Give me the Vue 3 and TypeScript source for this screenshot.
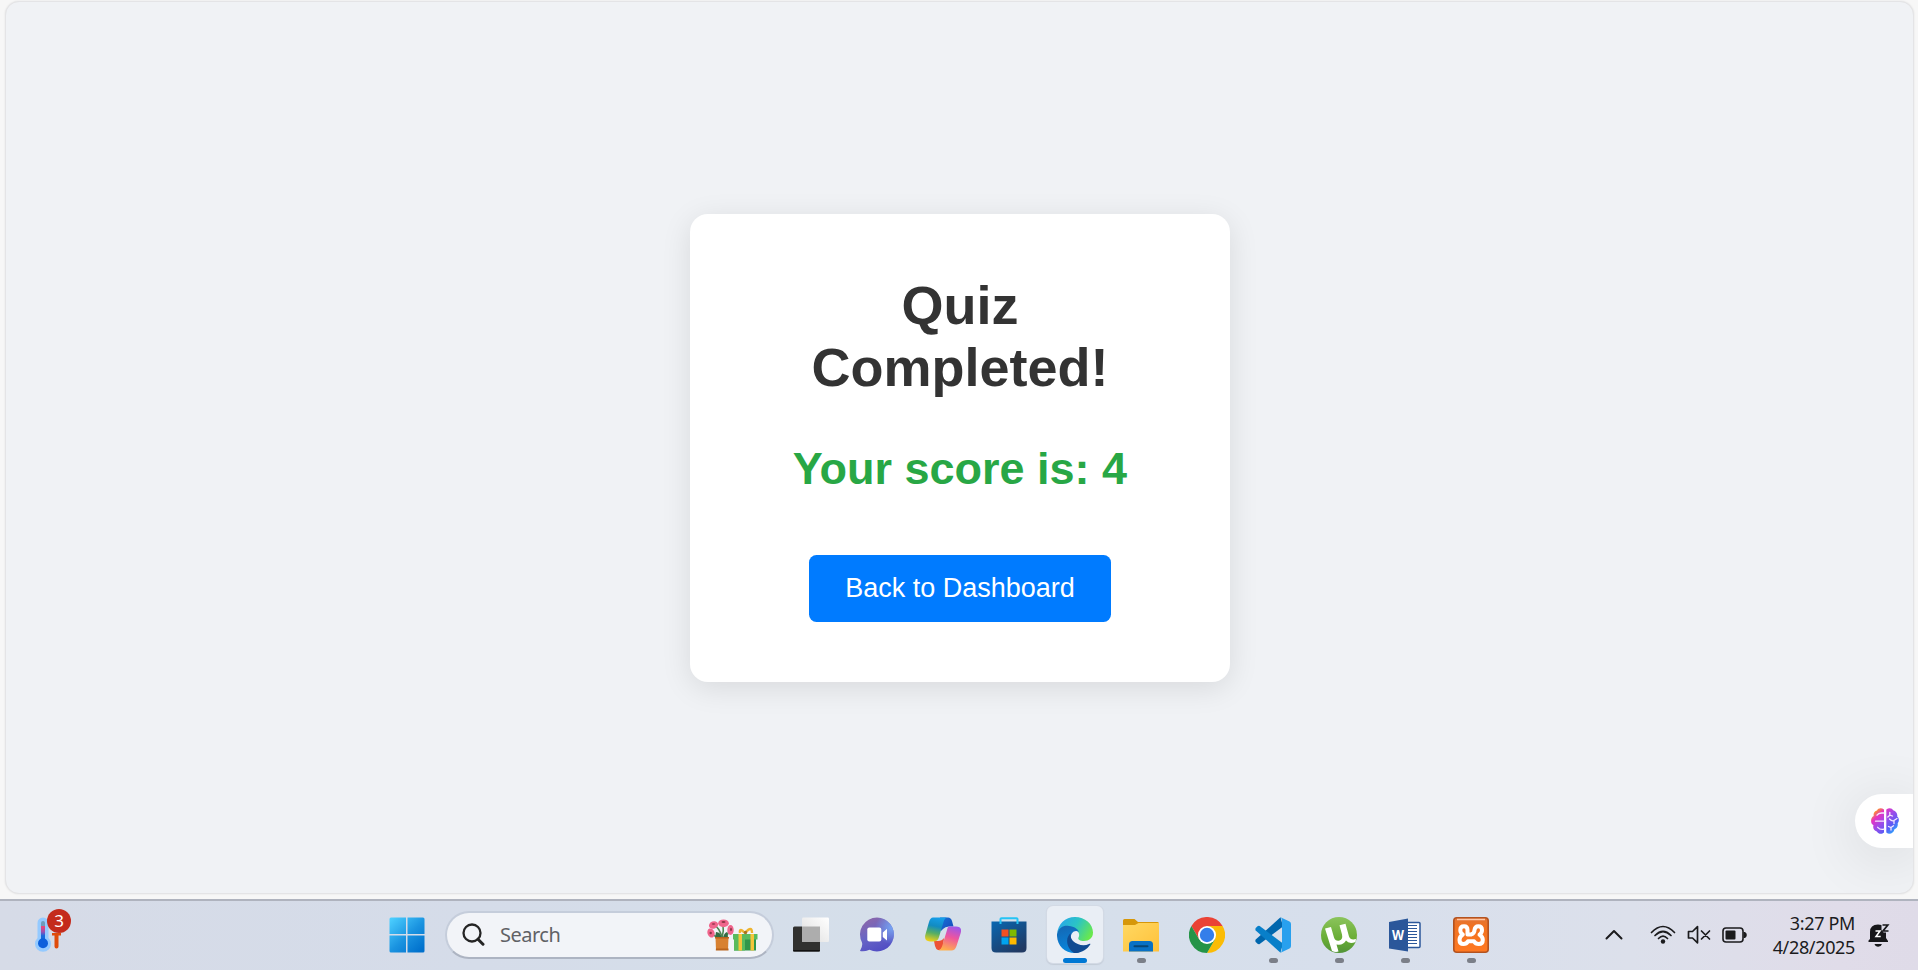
<script setup lang="ts">
import { ref } from 'vue'

const score = ref<number>(4)
const query = ref<string>('')
const notifications = ref<number>(3)
const clock = { time: '3:27 PM', date: '4/28/2025' }
</script>

<template>
  <div class="screen">
    <main class="browser">
      <section class="page">
        <div class="card">
          <h1>Quiz Completed!</h1>
          <p class="score">Your score is: {{ score }}</p>
          <button class="back" type="button">Back to Dashboard</button>
        </div>
        <aside class="assistant">
          <svg width="28" height="26" viewBox="0 0 28 26">
            <defs>
              <linearGradient id="brain" x1="0.05" y1="0" x2="0.950" y2="0.9">
                <stop offset="0" stop-color="#ff9a1f" />
                <stop offset="0.13" stop-color="#fb8a35" />
                <stop offset="0.28" stop-color="#e632c4" />
                <stop offset="0.5" stop-color="#a04be8" />
                <stop offset="0.75" stop-color="#5b5bf5" />
                <stop offset="1" stop-color="#25b4ff" />
              </linearGradient>
            </defs>
            <path fill="url(#brain)" d="M13 1.5C10.500 -.5 7 0 6 2.500C3.500 3 2 5.500 2.800 8C.8 9 0 11 .1 13.200C.1 15 1 16.500 2.500 17.200C1.500 20 3 22.500 5.800 23.500C7.500 26.300 11 26.500 13 24.500ZM15.300 1.500C17.800-.5 21-.2 22.200 2.300C25 3 26.800 5.700 26.200 8.500C28 10 28.600 13 26.700 15.300C27.200 18 26 20.300 23.500 21.200C22.500 25.500 18.200 27 15.300 24.500Z" />
            <path fill="none" stroke="#f6e8ff" stroke-width="1.300" stroke-linecap="round" d="M6 7.200Q7.500 4.800 11 5H13M4.500 13.200H13M6.700 19.300Q9 22 13 21.200M18.800 4.300V7.200L16.800 9M18.800 7.200L21.500 8M18.500 11Q21 13.500 23 12.500L26 10.500M23 12.500V15.500M17.500 18.500L20 19.500L22.500 17.800M20 19.500V22" />
          </svg>
        </aside>
      </section>
    </main>

    <footer class="taskbar">
      <div class="widgets">
        <svg width="28" height="36" viewBox="0 0 28 36">
          <defs>
            <linearGradient id="mercury" x1="0" y1="0" x2="0" y2="1">
              <stop offset="0" stop-color="#f34573" />
              <stop offset="0.45" stop-color="#9b4fb3" />
              <stop offset="0.75" stop-color="#1769dc" />
            </linearGradient>
          </defs>
          <path fill="#94caff" d="M2.500 6a5.500 5.500 0 0 1 11 0v15a8 8 0 1 1-11 0Z" />
          <path fill="#6f9bbc" d="M6 6a2 2 0 0 1 4 0v5H6Z" />
          <path fill="url(#mercury)" d="M6 9h4v13H6Z" />
          <circle cx="8" cy="26.300" r="5" fill="#0b5fdc" />
          <path fill="#df4b0b" d="M17 16H26V18.500H23.500V29.500a2 2 0 0 1-4 0V18.500H17Z" />
        </svg>
        <span class="badge">{{ notifications }}</span>
      </div>

      <nav class="apps">
        <button class="app" type="button" aria-label="Start">
          <svg width="36" height="36" viewBox="0 0 36 36">
            <defs>
              <linearGradient id="win" gradientUnits="userSpaceOnUse" x1="2" y1="1" x2="32" y2="34">
                <stop offset="0" stop-color="#4ccfff" />
                <stop offset="0.55" stop-color="#1a93e0" />
                <stop offset="1" stop-color="#0070cc" />
              </linearGradient>
            </defs>
            <path fill="url(#win)" d="M2 .5H17V17H.5V2Q.5.5 2 .5ZM18.500.5H34Q35.500.5 35.500 2V17H18.500ZM.5 18.500H17V35.500H2Q.5 35.500.5 34ZM18.500 18.500H35.500V34Q35.500 35.500 34 35.500H18.500Z" />
          </svg>
        </button>

        <label class="search">
          <svg width="23" height="24" viewBox="0 0 23 24" fill="none" stroke="#252525" stroke-linecap="round">
            <circle cx="10" cy="10" r="8.500" stroke-width="2.300" />
            <path d="M16 16.200L21 21.200" stroke-width="3" />
          </svg>
          <input v-model="query" type="text" placeholder="Search" />
          <svg class="gifts" width="51" height="32" viewBox="0 0 51 32">
            <g fill="none" stroke="#4c8752" stroke-width="1.600">
              <path d="M15 19Q13 9 7 6M15 19Q17 12 16 5M16 19Q22 16 22 10M14 19Q8 18 4 14" />
            </g>
            <path fill="#356c44" d="M9 13Q14 13 14.500 19H8ZM20 13Q17 14 16 19L21 18Z" />
            <g fill="#f0658c">
              <ellipse cx="6.500" cy="6" rx="4.700" ry="3.600" transform="rotate(-20 6.500 6)" />
              <ellipse cx="16.500" cy="4.300" rx="5.300" ry="3.900" />
              <ellipse cx="4" cy="14" rx="3.500" ry="4.700" transform="rotate(-20 4 14)" />
              <ellipse cx="23.500" cy="11" rx="3.200" ry="4.900" />
            </g>
            <g fill="#8e3547">
              <ellipse cx="6.500" cy="5" rx="1.800" ry=".8" />
              <ellipse cx="16.500" cy="3" rx="2" ry=".9" />
              <circle cx="3.700" cy="14" r="1.200" />
              <ellipse cx="24" cy="10.500" rx=".9" ry="1.700" />
            </g>
            <path fill="#d88131" d="M8.500 18.500H21.500L21 31H9Z" />
            <path fill="#b9641d" d="M8 18H22V19.500H8ZM9 29.500H21.500V31.500H8.800Z" />
            <path fill="#31964a" d="M27 19H49V31.500H27Z" />
            <path fill="#59bb5d" d="M26 15H50.500V20.500H26ZM27 20.500H38V31.500H27Z" />
            <path fill="#f5c53b" d="M31.500 15H35V31.500H31.500ZM43.500 15H47V31.500H43.500Z" />
            <path fill="none" stroke="#eeb42f" stroke-width="2.400" d="M38 14Q32 8 33 14M38 14Q45 6 45 14" />
            <circle cx="38.500" cy="13.500" r="1.700" fill="#a67222" />
          </svg>
        </label>

        <button class="app" type="button" aria-label="Task view">
          <svg width="36" height="36" viewBox="0 0 36 36">
            <defs>
              <linearGradient id="pane" x1="0" y1="1" x2="1" y2="0">
                <stop offset="0" stop-color="#ddd" /><stop offset="1" stop-color="#fff" />
              </linearGradient>
            </defs>
            <rect x="0" y="9.500" width="27" height="25" rx="1.500" fill="#31312f" />
            <rect x="0" y="33" width="27" height="1.500" rx=".7" fill="#111" />
            <rect x="9" y=".5" width="27" height="24.500" rx="1.200" fill="url(#pane)" />
            <path fill="#adadad" d="M9 9.500H27V25H10Q9 25 9 24Z" />
          </svg>
        </button>

        <button class="app" type="button" aria-label="Chat">
          <svg width="36" height="36" viewBox="0 0 36 36">
            <defs>
              <linearGradient id="chat" x1="0.200" y1="0" x2="0.650" y2="1">
                <stop offset="0" stop-color="#8e67a8" /><stop offset="0.500" stop-color="#6865c5" /><stop offset="1" stop-color="#504cc4" />
              </linearGradient>
              <radialGradient id="chatGlow" cx="0.95" cy="0.3" r="0.5">
                <stop offset="0" stop-color="#77a4f2" /><stop offset="1" stop-color="#77a4f2" stop-opacity="0" />
              </radialGradient>
            </defs>
            <path fill="url(#chat)" d="M18 .5a17 17 0 1 1-7.500 32.300Q5 35 1 34Q4 29 3 25.500A17 17 0 0 1 18 .5Z" />
            <path fill="url(#chatGlow)" d="M18 .5a17 17 0 1 1-7.500 32.300Q5 35 1 34Q4 29 3 25.500A17 17 0 0 1 18 .5Z" />
            <rect x="8.300" y="10.500" width="14" height="14" rx="2" fill="#fff" />
            <path fill="#fff" d="M23.800 15.500L28 11.800V23.500L23.800 20Z" />
          </svg>
        </button>

        <button class="app" type="button" aria-label="Copilot">
          <svg width="36" height="36" viewBox="0 0 36 36">
            <defs>
              <linearGradient id="copA" x1="0.500" y1="0" x2="0.300" y2="1">
                <stop offset="0" stop-color="#159de8" /><stop offset="0.350" stop-color="#128bc1" /><stop offset="0.650" stop-color="#56ae65" /><stop offset="1" stop-color="#f1d016" />
              </linearGradient>
              <linearGradient id="copB" x1="0.700" y1="0" x2="0.400" y2="1">
                <stop offset="0" stop-color="#9d55eb" /><stop offset="0.450" stop-color="#ee559e" /><stop offset="1" stop-color="#ffb04c" />
              </linearGradient>
              <linearGradient id="copC" x1="0" y1="0" x2="1" y2="1">
                <stop offset="0" stop-color="#1673d8" /><stop offset="1" stop-color="#1747b9" />
              </linearGradient>
            </defs>
            <path fill="url(#copC)" d="M15 .5H23Q26 .5 27 4L28.500 9.500H24Q20 9.500 18 12L16 14Z" />
            <path fill="#ed5136" d="M9 24H13Q17 24 19 21L18 29Q16.500 33.500 13 33Q11 32.500 10 29Z" />
            <path fill="url(#copA)" d="M8 .5H22Q19.500 1 18.500 5L14 20Q13 24.500 8 24.500H5Q-1 24.500.3 18L4 5Q5.300.5 8 .5Z" />
            <path fill="url(#copB)" d="M24 9.500H31Q37.500 9.500 35.700 16L31.500 29Q30 33.500 26.500 33.500H13Q16 33 17.500 28L22 13Q22.700 9.500 24 9.500Z" />
          </svg>
        </button>

        <button class="app" type="button" aria-label="Store">
          <svg width="36" height="36" viewBox="0 0 36 36">
            <defs>
              <linearGradient id="store" x1="0" y1="0" x2="0.700" y2="1">
                <stop offset="0" stop-color="#0867b2" /><stop offset="1" stop-color="#213a63" />
              </linearGradient>
            </defs>
            <path fill="url(#store)" d="M.5 4.500H35.500V31Q35.500 35.500 31 35.500H5Q.5 35.500.5 31Z" />
            <path fill="none" stroke="#25c4f5" stroke-width="2" d="M9.500 7V2Q9.500 1.300 10.500 1.300H25.500Q26.500 1.300 26.500 2V7" />
            <path fill="#f25022" d="M10.500 12.500H17.500V19.500H10.500Z" />
            <path fill="#7fba00" d="M18.500 12.500H25.500V19.500H18.500Z" />
            <path fill="#00a4ef" d="M10.500 20.500H17.500V27.500H10.500Z" />
            <path fill="#ffb900" d="M18.500 20.500H25.500V27.500H18.500Z" />
          </svg>
        </button>

        <button class="app active running" type="button" aria-label="Edge">
          <svg width="36" height="36" viewBox="0 0 36 36">
            <defs>
              <linearGradient id="edgeTop" x1="0" y1="0.200" x2="1" y2="0.600">
                <stop offset="0" stop-color="#27a5ed" /><stop offset="0.500" stop-color="#2bc4c5" /><stop offset="1" stop-color="#69e84d" />
              </linearGradient>
              <linearGradient id="edgeSide" x1="0.200" y1="0" x2="0.500" y2="1">
                <stop offset="0" stop-color="#1467b4" /><stop offset="1" stop-color="#0788de" />
              </linearGradient>
            </defs>
            <path fill="url(#edgeTop)" d="M0 17C1 7 8 0 18 0C28 0 36 7 36 15.500C36 21 32 24 27 24C23 24 20.500 22.500 21.500 20.500C23.500 17 21 13.500 17 12C10 7.500 2 11 0 17Z" />
            <path fill="url(#edgeSide)" d="M0 17C2 10 7 8 12 9C17 9.500 21 12 22 15C17 12 13 17 14 22C15 29 22 33 28 31C25 34 21.500 36 18 36C7 36-.5 28 0 17Z" />
            <path fill="#104a91" d="M14 16C8 20 9 31 17 36C24 36.500 30 32.500 33.300 27.500C33.500 26.500 33 26.500 32 27C27 29.500 20 28 16 24C13.500 21 13 18 14 16Z" />
          </svg>
        </button>

        <button class="app running" type="button" aria-label="File Explorer">
          <svg width="36" height="36" viewBox="0 0 36 36">
            <defs>
              <linearGradient id="folder" x1="0" y1="0" x2="1" y2="1">
                <stop offset="0" stop-color="#ffd862" /><stop offset="1" stop-color="#ffc13a" />
              </linearGradient>
            </defs>
            <path fill="#d69709" d="M0 3.500Q0 2 1.500 2H11.500L15 5H34.500Q36 5 36 6.500V12H0Z" />
            <path fill="url(#folder)" d="M0 8H12L15.500 6H36V34.500H0Z" />
            <path fill="#0871c5" d="M6 34.500V27.500Q6 24 9.500 24H26.500Q30 24 30 27.500V34.500Z" />
            <path stroke="#064675" stroke-width="2" stroke-linecap="round" d="M11.500 29.200H24.500" />
          </svg>
        </button>

        <button class="app" type="button" aria-label="Chrome">
          <svg width="36" height="36" viewBox="0 0 36 36">
            <path fill="#ea4335" d="M2.400 9A18 18 0 0 1 33.600 9H18L10.200 22.500Z" />
            <path fill="#fbbc05" d="M33.600 9A18 18 0 0 1 18 36L25.800 22.500L18 9Z" />
            <path fill="#259447" d="M2.400 9A18 18 0 0 0 18 36L25.800 22.500H10.200Z" />
            <circle cx="18" cy="18" r="9" fill="#fff" />
            <circle cx="18" cy="18" r="7.200" fill="#347eea" />
          </svg>
        </button>

        <button class="app running" type="button" aria-label="Visual Studio Code">
          <svg width="36" height="36" viewBox="0 0 36 36">
            <path fill="#0066ad" d="M.7 22.500L25.500.3L28 9.500L4.700 27Q3.500 27.500 2.500 26.700L.7 25Q0 23.700.7 22.500Z" />
            <path fill="#087fc9" d="M.7 13.500L25.500 35.700L28 26.500L4.700 9Q3.500 8.500 2.500 9.300L.7 11Q0 12.300.7 13.500Z" />
            <path fill="#28a0ee" d="M25.500.3L34.500 4.500Q36 5.200 36 7V29Q36 30.800 34.500 31.500L25.500 35.700Q27 34.500 27 32.500V3.500Q27 1.500 25.500.3Z" />
          </svg>
        </button>

        <button class="app running" type="button" aria-label="uTorrent">
          <svg width="36" height="36" viewBox="0 0 36 36">
            <defs>
              <linearGradient id="torrent" x1="0" y1="0" x2="0" y2="1">
                <stop offset="0" stop-color="#8bc45c" /><stop offset="0.600" stop-color="#69ad35" /><stop offset="1" stop-color="#529438" />
              </linearGradient>
            </defs>
            <circle cx="18" cy="18" r="18" fill="url(#torrent)" />
            <path fill="#fff" d="M4 11.500L10 10L13 20.500Q14.500 24.500 18.500 23.500Q22 22.300 21 17.500L18.500 8.200L24.500 6.800L28 19.500Q29.500 23.500 35 22L34.500 25Q28 27.500 25 23.500Q22.500 28.500 15.500 27.500L17.500 34.500Q14.500 35.500 11 34Z" />
          </svg>
        </button>

        <button class="app running" type="button" aria-label="Word">
          <svg width="36" height="36" viewBox="0 0 36 36">
            <rect x="17" y="5.500" width="16" height="25" rx="1" fill="#fff" stroke="#2b579a" stroke-width="1.500" />
            <path stroke="#2b579a" stroke-width="1.200" d="M20 8.500H30M20 11.500H30M20 14.500H30M20 17.500H30M20 20.500H30M20 23.500H30M20 26.500H30" />
            <path fill="#2b579a" d="M2 5L21 1.500V34.500L2 31.500Z" />
            <text x="11" y="23" text-anchor="middle" textLength="12" lengthAdjust="spacingAndGlyphs" class="word">W</text>
          </svg>
        </button>

        <button class="app running" type="button" aria-label="XAMPP">
          <svg width="36" height="36" viewBox="0 0 36 36">
            <defs>
              <linearGradient id="xampp" x1="0" y1="0" x2="0" y2="1">
                <stop offset="0" stop-color="#e17537" /><stop offset="0.250" stop-color="#f17220" /><stop offset="1" stop-color="#ff7922" />
              </linearGradient>
            </defs>
            <rect x=".8" y=".8" width="34.400" height="34.400" rx="3" fill="url(#xampp)" stroke="#b35320" stroke-width="1.600" />
            <path d="M4 2.500H32" stroke="#ffc7a5" stroke-width="1.500" />
            <path fill="none" stroke="#fff" stroke-width="4" stroke-linecap="round" stroke-linejoin="round" d="M18 17.500H14.500V13Q14.500 9.200 11 9.200Q7.300 9.200 7.300 13Q7.300 16 9.800 17.500Q6.500 19.500 6.500 23Q6.500 27 10.500 27Q13.500 27 15 24.200H21Q22.500 27 25.700 27Q29.800 27 29.800 23Q29.800 19.500 26.500 17.700Q29 16 29 13Q29 9.200 25.300 9.200Q22 9.200 21.500 13Q21.500 16.500 18 17.500" />
          </svg>
        </button>
      </nav>

      <div class="tray">
        <svg class="chevron" width="18" height="12" viewBox="0 0 18 12" fill="none" stroke="#1b1b1d" stroke-width="2" stroke-linecap="round" stroke-linejoin="round">
          <path d="M1.500 9.500L9 2L16.500 9.500" />
        </svg>
        <div class="status">
          <svg width="26" height="20" viewBox="0 0 26 20" fill="none" stroke="#1b1b1d" stroke-width="1.700" stroke-linecap="round">
            <path d="M1.500 7.500Q13-4.500 24.500 7.500M5 10.500Q13 2.500 21 10.500M8.500 13.500Q13 9 17.500 13.500" />
            <circle cx="13" cy="16.500" r="2.200" fill="#1b1b1d" stroke="none" />
          </svg>
          <svg width="24" height="20" viewBox="0 0 24 20" fill="none" stroke="#1b1b1d" stroke-width="1.700" stroke-linejoin="round" stroke-linecap="round">
            <path d="M1.500 6.500H5.500L10.500 1.700V17.800L5.500 13H1.500ZM14.500 6L22.500 14M22.500 6L14.500 14" />
          </svg>
          <svg width="25" height="18" viewBox="0 0 25 18">
            <rect x="1" y="2" width="20" height="14" rx="3" fill="none" stroke="#1b1b1d" stroke-width="1.600" />
            <rect x="3.500" y="4.500" width="10" height="9" rx="1" fill="#1b1b1d" />
            <path fill="#1b1b1d" d="M21.500 6H23Q24.800 7 24.800 9T23 12H21.500Z" />
          </svg>
        </div>
        <div class="clock">
          <span>{{ clock.time }}</span>
          <span>{{ clock.date }}</span>
        </div>
        <svg class="bell" width="22" height="24" viewBox="0 0 22 24">
          <path fill="#17171a" d="M2 16V9Q2 1.500 10 1.500T18 9V15L20 18V19H.5V17.500ZM6.500 21H14Q13 23.800 10.200 23.800T6.500 21Z" />
          <path fill="#dedde9" d="M13.500 1H22V9.500H15.500L13.500 7Z" />
          <path fill="none" stroke="#fff" stroke-width="1.500" d="M7.500 8H12L8 13.500H12.700" />
          <path fill="none" stroke="#17171a" stroke-width="1.700" d="M14.500 2H19.800L15 8H20.500" />
        </svg>
      </div>
    </footer>
  </div>
</template>

<style>
html,
body {
  margin: 0;
  overflow: hidden;
}
</style>

<style scoped>
* {
  box-sizing: border-box;
}

.screen {
  width: 100vw;
  height: 100vh;
  display: flex;
  flex-direction: column;
  font-family: "Liberation Sans", Arial, sans-serif;
  background: #f7f7f7;
}

.browser {
  height: 899px;
  padding: 1px 4px 5px 5px;
}

.page {
  height: 100%;
  position: relative;
  display: flex;
  align-items: center;
  justify-content: center;
  overflow: hidden;
  background: #f0f2f5;
  border: 1px solid #e4e4e6;
  border-radius: 14px;
  box-shadow: 0 0 2px rgba(0, 0, 0, 0.1);
}

.card {
  width: 540px;
  margin: 1px 0 0 1px;
  padding: 60px;
  display: flex;
  flex-direction: column;
  align-items: center;
  text-align: center;
  background: #fff;
  border-radius: 18px;
  box-shadow: 0 6px 30px rgba(0, 0, 0, 0.1);
}

h1 {
  width: 300px;
  margin: 0 0 45px;
  font-size: 54px;
  line-height: 62px;
  color: #333;
}

.score {
  margin: 0 0 60px;
  font-size: 45px;
  line-height: 52px;
  font-weight: 700;
  color: #28a745;
}

.back {
  width: 302px;
  height: 67px;
  padding: 0;
  border: 0;
  border-radius: 7.5px;
  background: #007bff;
  color: #fff;
  font: 27px/31px "Liberation Sans", Arial, sans-serif;
}

.assistant {
  position: absolute;
  right: 0;
  top: 792px;
  width: 58px;
  height: 54px;
  padding-left: 16px;
  display: flex;
  align-items: center;
  background: #fff;
  border-radius: 27px 0 0 27px;
  box-shadow: 0 8px 60px rgba(0, 0, 0, 0.12);
}

.taskbar {
  height: 71px;
  display: flex;
  align-items: center;
  padding-bottom: 2px;
  border-top: 2px solid #afb3be;
  background: linear-gradient(90deg, #d6dbe7 0%, #d5dce9 25%, #d5dfea 48%, #d7dfec 70%, #dce0eb 85%, #e0dce9 96%, #dfdbe8 100%);
  font-family: "Noto Sans", "Open Sans", sans-serif;
}

.widgets {
  position: relative;
  width: 374px;
  height: 36px;
  padding-left: 35px;
}

.badge {
  position: absolute;
  left: 47px;
  top: -8px;
  width: 24px;
  height: 24px;
  border-radius: 50%;
  background: #c42b1c;
  color: #fff;
  font-size: 17px;
  line-height: 24px;
  text-align: center;
}

.apps {
  display: flex;
  align-items: center;
}

.app {
  position: relative;
  width: 66px;
  height: 57px;
  padding: 0;
  border: 0;
  display: flex;
  align-items: center;
  justify-content: center;
  background: none;
}

.app svg {
  display: block;
}

.app.active {
  width: 56px;
  margin: 0 5px;
  border-radius: 6px;
  background: #e9eef5;
  box-shadow: 0 0 0 1px #d3dae5, 0 1px 1px 1px #c4ccd8;
}

.running::after {
  content: "";
  position: absolute;
  left: 50%;
  bottom: 0;
  width: 9px;
  height: 5px;
  margin-left: -4.5px;
  border-radius: 2.5px;
  background: #7b7f88;
}

.active::after {
  width: 24px;
  margin-left: -12px;
  background: #0078d4;
}

.search {
  width: 329px;
  height: 48px;
  margin: 0 4px 0 5px;
  padding: 0 14px 0 15px;
  display: flex;
  align-items: center;
  border: 2px solid #c5cddb;
  border-bottom-color: #adb4c2;
  border-radius: 24px;
  background: #f2f4f8;
}

.search input {
  flex: 1;
  min-width: 0;
  margin-left: 15px;
  padding: 0;
  border: 0;
  outline: 0;
  background: transparent;
  font: 20px "Noto Sans", sans-serif;
  letter-spacing: -0.5px;
}

.search input::placeholder {
  color: #606165;
  opacity: 1;
}

.word {
  fill: #fff;
  font: 700 15px "Open Sans", sans-serif;
}

.tray {
  flex: 1;
  display: flex;
  align-items: center;
  justify-content: flex-end;
  padding-right: 28px;
}

.chevron {
  margin-right: 27px;
}

.status {
  display: flex;
  align-items: center;
  gap: 11px;
}

.clock {
  width: 108px;
  display: flex;
  flex-direction: column;
  align-items: flex-end;
  font-size: 18px;
  line-height: 24px;
  letter-spacing: -0.35px;
  color: #1b1b1d;
}

.bell {
  margin-left: 13px;
}
</style>
